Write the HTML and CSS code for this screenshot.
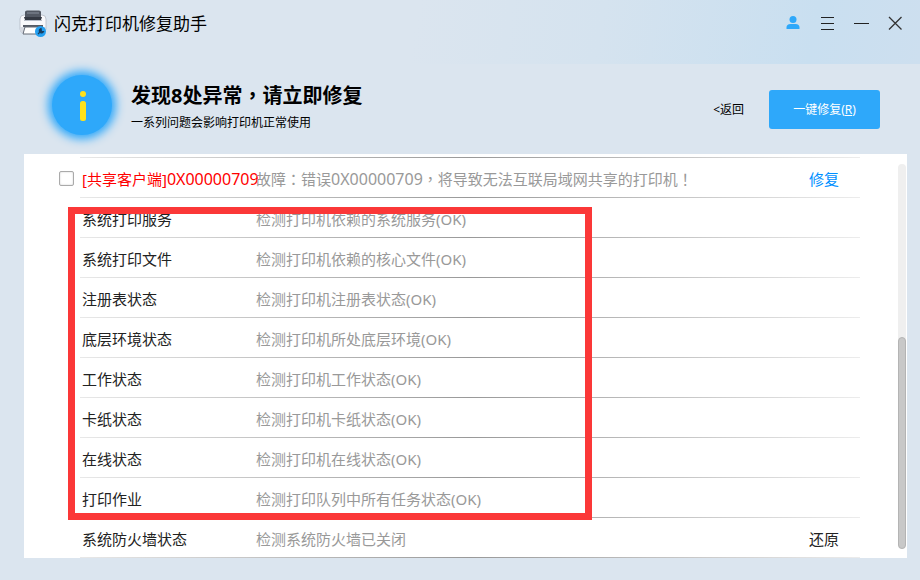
FILE: index.html
```html
<!DOCTYPE html>
<html lang="zh-CN">
<head>
<meta charset="utf-8">
<title>闪克打印机修复助手</title>
<link rel="stylesheet" href="styles.css">
</head>
<body>
<header class="titlebar">
  <svg class="logo" viewBox="0 0 28 28" aria-hidden="true">
    <path d="M5 5H23Q27 5 27 9V19Q27 23 23 23H5Q1 23 1 19V9Q1 5 5 5Z" fill="#f8f9fc" stroke="#b4bac5" stroke-width=".8"/>
    <path d="M1 17H27V19Q27 23 23 23H5Q1 23 1 19Z" fill="#d5d9e1"/>
    <path d="M6 2Q6 .500 8 .500H20Q22 .500 22 2V8H6Z" fill="#525863"/>
    <path d="M8 2H20V4H8Z" fill="#6d7480"/>
    <path d="M5 7H23L22 10H6Z" fill="#343943"/>
    <path d="M5 10.500H23" stroke="#b7bdc8"/>
    <path d="M4 15H24V17H4Z" fill="#555b66"/>
    <path d="M6 17H22L23 24H4Z" fill="#fff" stroke="#666c77"/>
    <circle cx="21.500" cy="21.500" r="5.500" fill="#239ff0"/>
    <path d="M19 24L22 21M22 18.500A2.200 2.200 0 1 0 24.500 21.500L22.500 21.500Z" fill="#173e61" stroke="#173e61" stroke-width="1.200"/>
  </svg>
  <h1 class="app-name">闪克打印机修复助手</h1>
  <nav class="window-tools">
    <button class="tool" aria-label="用户"><svg viewBox="0 0 16 16"><circle cx="8" cy="4.500" r="3.500" fill="#2ea8fa"/><path d="M1.500 14V12.500Q1.500 9 5.500 9H10.500Q14.500 9 14.500 12.500V14Z" fill="#2ea8fa"/></svg></button>
    <button class="tool" aria-label="菜单"><svg viewBox="0 0 16 16"><path d="M2 2.500H15M2 8.500H15M2 14.500H15" stroke="#222" fill="none"/></svg></button>
    <button class="tool" aria-label="最小化"><svg viewBox="0 0 16 16"><path d="M1 8.500H16" stroke="#222" fill="none"/></svg></button>
    <button class="tool" aria-label="关闭"><svg viewBox="0 0 16 16"><path d="M2 2L14.500 14.500M14.500 2L2 14.500" stroke="#333" stroke-width="1.300" fill="none"/></svg></button>
  </nav>
</header>
<section class="summary">
  <div class="badge"><svg viewBox="0 0 60 60" aria-hidden="true"><ellipse cx="31" cy="19" rx="3" ry="3" fill="#ffe11a"/><rect x="28" y="26" width="6" height="20" rx="2.500" fill="#ffe11a"/></svg></div>
  <div class="message">
    <h2 class="headline">发现8处异常<span class="mark" lang="zh-TW">，</span>请立即修复</h2>
    <p class="detail">一系列问题会影响打印机正常使用</p>
  </div>
  <a class="back" href="#">&lt;返回</a>
  <button class="fix-all" accesskey="r">一键修复(<u>R</u>)</button>
</section>
<main class="panel">
  <div class="results">
    <table class="checks">
      <tbody>
        <tr class="fault"><td class="pick"><input type="checkbox" id="share" aria-label="共享客户端"></td><th scope="row"><label for="share">[共享客户端]<span class="code">0X00000709</span></label></th><td>故障<span class="mark" lang="zh-TW">：</span>错误<span class="code">0X00000709</span><span class="mark" lang="zh-TW">，</span>将导致无法互联局域网共享的打印机<span class="mark" lang="zh-TW">！</span></td><td class="action"><a class="repair" href="#">修复</a></td></tr>
        <tr><td></td><th scope="row">系统打印服务</th><td>检测打印机依赖的系统服务(OK)</td><td></td></tr>
        <tr><td></td><th scope="row">系统打印文件</th><td>检测打印机依赖的核心文件(OK)</td><td></td></tr>
        <tr><td></td><th scope="row">注册表状态</th><td>检测打印机注册表状态(OK)</td><td></td></tr>
        <tr><td></td><th scope="row">底层环境状态</th><td>检测打印机所处底层环境(OK)</td><td></td></tr>
        <tr><td></td><th scope="row">工作状态</th><td>检测打印机工作状态(OK)</td><td></td></tr>
        <tr><td></td><th scope="row">卡纸状态</th><td>检测打印机卡纸状态(OK)</td><td></td></tr>
        <tr><td></td><th scope="row">在线状态</th><td>检测打印机在线状态(OK)</td><td></td></tr>
        <tr><td></td><th scope="row">打印作业</th><td>检测打印队列中所有任务状态(OK)</td><td></td></tr>
        <tr><td></td><th scope="row">系统防火墙状态</th><td>检测系统防火墙已关闭</td><td class="action"><a href="#">还原</a></td></tr>
      </tbody>
    </table>
    <div class="highlight"></div>
  </div>
  <div class="track"><div class="thumb"></div></div>
</main>
</body>
</html>
```
FILE: styles.css
```css
* { box-sizing: border-box; }

body {
  margin: 0;
  min-height: 100vh;
  display: flex;
  flex-direction: column;
  background: #dbe5ef;
  color: #000;
  font-family: "Noto Sans", "Noto Sans CJK SC", sans-serif;
}

h1, h2, p { margin: 0; }
a { color: inherit; text-decoration: none; }
button { border: 0; font-family: inherit; cursor: pointer; }

/* centred full-width punctuation */
.mark { font-family: "Noto Sans CJK TC", sans-serif; line-height: 1; }

.titlebar {
  display: flex;
  align-items: flex-start;
  height: 64px;
  padding: 10px 17px 0 19px;
  background: linear-gradient(100deg, #dbe5ef 45%, #d5e3ef 65%, #c9dff0 88%, #cddfef);
}
.logo { width: 28px; height: 28px; }
.app-name {
  flex: 1;
  margin-left: 7px;
  font-size: 17px;
  line-height: 28px;
  font-weight: 400;
}
.window-tools { display: flex; gap: 18px; padding-top: 5px; }
.tool { width: 16px; height: 16px; padding: 0; background: none; }
.tool svg { display: block; width: 16px; height: 16px; }

.summary {
  display: flex;
  align-items: center;
  height: 90px;
  padding: 0 40px 0 52px;
}
.badge {
  width: 60px;
  height: 60px;
  margin-bottom: 8px;
  border-radius: 50%;
  background: #2ea8fa;
  box-shadow: 0 0 10px 4px #2ea8fa;
}
.message { flex: 1; margin: 0 0 4px 19px; }
.headline { font-size: 20px; line-height: 32px; font-weight: 700; }
.detail { font-size: 12px; line-height: 22px; }
.back { margin-right: 25px; font-size: 12px; }
.fix-all {
  width: 111px;
  height: 39px;
  padding: 0;
  border-radius: 3px;
  background: #2ea8fa;
  color: #fff;
  font-size: 12px;
}

.panel {
  flex: 1;
  display: flex;
  margin: 0 13px 22px 24px;
  padding-top: 3px;
  background: #fff;
}
.results { position: relative; flex: 1; padding: 0 38px 0 32px; }

.checks {
  width: 100%;
  table-layout: fixed;
  border-collapse: separate;
  border-spacing: 0;
  padding-top: 1px;
  background: linear-gradient(90deg, #e8e8e8, #999 50%, #ececec) 24px 0 / calc(100% - 24px) 1px no-repeat;
  font-size: 15px;
  line-height: 22px;
}
.checks tr {
  height: 40px;
  background: linear-gradient(90deg, #e8e8e8, #999 50%, #ececec) 24px 100% / calc(100% - 24px) 1px no-repeat;
}
.checks td, .checks th { padding: 2px 0 0; white-space: nowrap; text-align: left; font-weight: 400; vertical-align: middle; }
.checks th { width: 174px; color: #222; }
.checks td { color: #999; }
.checks td:first-child { width: 26px; }
.checks td:last-child { width: 51px; color: #222; }
.checks .fault th { color: #f00; }
.checks .code { font-size: 16px; }
.checks .repair { color: #0090ff; }
.checks .pick { padding: 1px 0 0 3px; }
.pick input {
  display: block;
  appearance: none;
  width: 15px;
  height: 15px;
  margin: 0;
  border: 1px solid #aaa;
  border-radius: 2px;
  background: #fff;
  box-shadow: inset 0 0 2px #ccc;
}

.highlight {
  position: absolute;
  left: 44px;
  top: 50px;
  width: 524px;
  height: 313px;
  border: 7px solid #fb3838;
  pointer-events: none;
}

.track {
  width: 8px;
  margin: 7px 1px 9px 0;
  border-radius: 4px;
  background: #efefef;
  display: flex;
  align-items: flex-end;
}
.thumb {
  width: 100%;
  height: 55%;
  border: 1px solid #b4b4b4;
  border-radius: 4px;
  background: #c8c8c8;
}
```
